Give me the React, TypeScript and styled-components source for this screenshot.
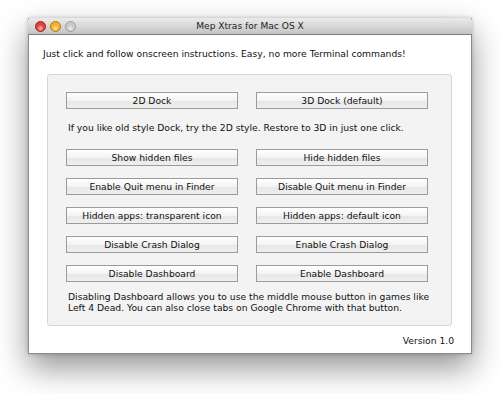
import React from 'react'
import styled, { createGlobalStyle } from 'styled-components'

const GlobalStyle = createGlobalStyle`
  html, body {
    margin: 0;
    padding: 0;
    background: #ffffff;
  }
  body {
    font-family: "DejaVu Sans", "Liberation Sans", sans-serif;
    color: #111111;
  }
`

const Desktop = styled.div`
  width: 500px;
  height: 394px;
  padding: 18px 0 0 28px;
  box-sizing: border-box;
`

const Window = styled.div`
  width: 444px;
  height: 336px;
  box-sizing: border-box;
  border: 1px solid #8c8c8c;
  border-top: none;
  background: #ffffff;
  display: flex;
  flex-direction: column;
  box-shadow: 0 14px 30px rgba(0, 0, 0, 0.42), 0 0 4px rgba(0, 0, 0, 0.22);
`

const TitleBar = styled.div`
  position: relative;
  height: 16px;
  flex: none;
  display: flex;
  align-items: center;
  justify-content: center;
  background: linear-gradient(#ebebeb, #c4c4c4);
  border-bottom: 1px solid #7d7d7d;
  border-radius: 3px 3px 0 0;
  margin: 0 -1px;
  font-size: 9.1px;
  color: #222222;
`

const Lights = styled.div`
  position: absolute;
  left: 7px;
  top: 3px;
  display: flex;
  gap: 4px;
`

const Light = styled.span<{ $color: string; $edge: string }>`
  width: 11px;
  height: 11px;
  border-radius: 50%;
  box-sizing: border-box;
  border: 1px solid ${(p) => p.$edge};
  background: radial-gradient(circle at 50% 70%, #ffffffaa 0, transparent 45%),
    ${(p) => p.$color};
`

const Body = styled.div`
  flex: 1;
  display: flex;
  flex-direction: column;
  padding: 13px 0 0 0;
`

const Intro = styled.p`
  margin: 0 0 14px 14px;
  font-size: 9.2px;
  line-height: 12px;
`

const GroupBox = styled.div`
  margin: 0 19px 0 18px;
  padding: 17px 24px 11px 18px;
  background: #f3f3f3;
  border: 1px solid #d6d6d6;
  border-radius: 3px;
  display: flex;
  flex-direction: column;
`

const ButtonRow = styled.div<{ $space?: number }>`
  display: grid;
  grid-template-columns: 172px 172px;
  column-gap: 18px;
  margin-bottom: ${(p) => p.$space ?? 12}px;
`

const MacButton = styled.button`
  height: 17px;
  padding: 0;
  box-sizing: border-box;
  border: 1px solid #9b9b9b;
  border-radius: 0;
  background: linear-gradient(#ffffff, #f4f4f4 50%, #e6e6e6 51%, #efefef);
  font-family: inherit;
  font-size: 9.2px;
  color: #111111;
  text-align: center;
  white-space: nowrap;
`

const Note = styled.p<{ $space?: number }>`
  margin: 0 0 ${(p) => p.$space ?? 0}px 2px;
  font-size: 9.2px;
  line-height: 11.5px;
  white-space: nowrap;
`

const Footer = styled.div`
  display: flex;
  justify-content: flex-end;
  padding: 9px 17px 0 0;
  font-size: 9.2px;
`

const rows: [string, string][] = [
  ['Show hidden files', 'Hide hidden files'],
  ['Enable Quit menu in Finder', 'Disable Quit menu in Finder'],
  ['Hidden apps: transparent icon', 'Hidden apps: default icon'],
  ['Disable Crash Dialog', 'Enable Crash Dialog'],
  ['Disable Dashboard', 'Enable Dashboard'],
]

export default function App() {
  return (
    <>
      <GlobalStyle />
      <Desktop>
        <Window>
          <TitleBar>
            <Lights>
              <Light $color="#e2403a" $edge="#a2231f" />
              <Light $color="#f1b22a" $edge="#b07814" />
              <Light $color="#c9c9c9" $edge="#9e9e9e" />
            </Lights>
            Mep Xtras for Mac OS X
          </TitleBar>
          <Body>
            <Intro>Just click and follow onscreen instructions. Easy, no more Terminal commands!</Intro>
            <GroupBox>
              <ButtonRow $space={13}>
                <MacButton>2D Dock</MacButton>
                <MacButton>3D Dock (default)</MacButton>
              </ButtonRow>
              <Note $space={15}>If you like old style Dock, try the 2D style. Restore to 3D in just one click.</Note>
              {rows.map(([a, b], i) => (
                <ButtonRow key={a} $space={i === rows.length - 1 ? 9 : 12}>
                  <MacButton>{a}</MacButton>
                  <MacButton>{b}</MacButton>
                </ButtonRow>
              ))}
              <Note>
                Disabling Dashboard allows you to use the middle mouse button in games like
                <br />
                Left 4 Dead. You can also close tabs on Google Chrome with that button.
              </Note>
            </GroupBox>
            <Footer>Version 1.0</Footer>
          </Body>
        </Window>
      </Desktop>
    </>
  )
}
